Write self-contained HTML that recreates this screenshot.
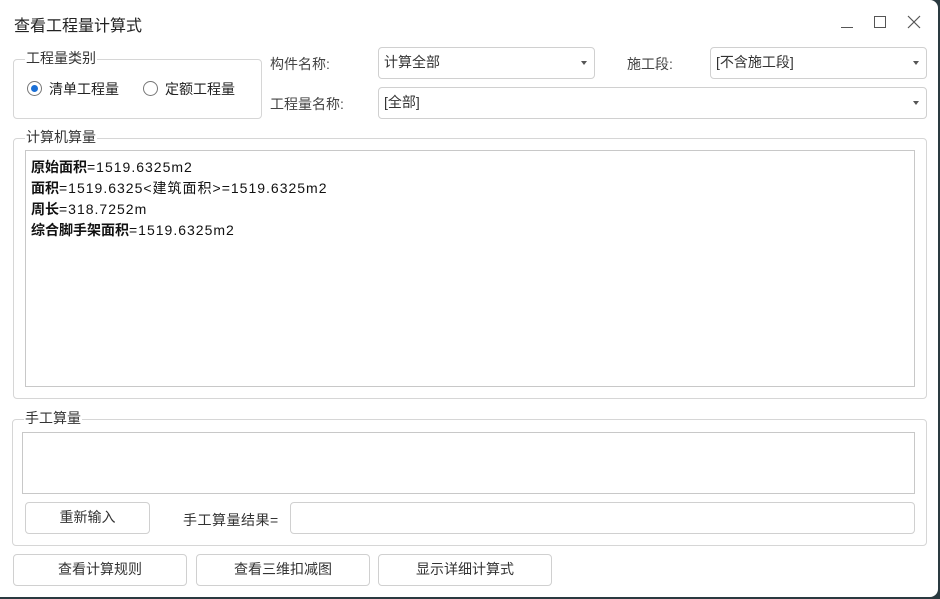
<!DOCTYPE html>
<html><head><meta charset="utf-8"><style>
*{box-sizing:border-box;margin:0;padding:0}
body{width:940px;height:599px;background:#2a3a40;position:relative;overflow:hidden;font-family:"Liberation Sans","Noto Sans CJK SC",sans-serif;font-size:14px;color:#222}
.win{position:absolute;left:0;top:0;width:938px;height:597px;background:#fff;border-radius:0 8px 8px 0}
.a{position:absolute}
.title{left:14px;top:12px;font-size:16px;color:#222}
.grp{position:absolute;border:1px solid #d6d6d6;border-radius:4px}
.leg{position:absolute;background:#fff;padding:0 1px;color:#333;font-size:14px;line-height:16px}
.box{position:absolute;border:1px solid #d0d0d0;border-radius:4px;background:#fff}
.cb{position:absolute;border:1px solid #d0d0d0;border-radius:4px;background:#fff;padding-left:5px;line-height:29px;color:#333}
.cb:after{content:"";position:absolute;right:7px;top:13px;border-left:3px solid transparent;border-right:3px solid transparent;border-top:4px solid #555}
.btn{position:absolute;border:1px solid #d0d0d0;border-radius:4px;background:#fff;text-align:center;line-height:29px;color:#333}
.lbl{position:absolute;color:#444}
.rad{position:absolute;width:15px;height:15px;border:1px solid #777;border-radius:50%}
.txt{position:absolute;left:31px;line-height:21px;font-size:14px;color:#111;letter-spacing:1px}
b{font-weight:bold;letter-spacing:0}
</style></head><body>
<div class="win">
<div class="a title">查看工程量计算式</div>
<div class="a" style="left:841px;top:27px;width:12px;border-top:1px solid #555"></div>
<div class="a" style="left:874px;top:16px;width:12px;height:12px;border:1px solid #555"></div>
<svg class="a" style="left:907px;top:15px" width="14" height="14"><path d="M1 1L13 13M13 1L1 13" stroke="#555" stroke-width="1.2"/></svg>

<div class="grp" style="left:13px;top:59px;width:249px;height:60px"></div>
<div class="leg" style="left:25px;top:50px">工程量类别</div>
<div class="rad" style="left:27px;top:81px"><div style="position:absolute;left:3px;top:3px;width:7px;height:7px;border-radius:50%;background:#1a6fd6"></div></div>
<div class="lbl" style="left:49px;top:79px;color:#222">清单工程量</div>
<div class="rad" style="left:143px;top:81px"></div>
<div class="lbl" style="left:165px;top:79px;color:#222">定额工程量</div>

<div class="lbl" style="left:270px;top:54px">构件名称:</div>
<div class="cb" style="left:378px;top:47px;width:217px;height:32px">计算全部</div>
<div class="lbl" style="left:627px;top:54px">施工段:</div>
<div class="cb" style="left:710px;top:47px;width:217px;height:32px">[不含施工段]</div>
<div class="lbl" style="left:270px;top:94px">工程量名称:</div>
<div class="cb" style="left:378px;top:87px;width:549px;height:32px">[全部]</div>

<div class="grp" style="left:13px;top:138px;width:914px;height:261px"></div>
<div class="leg" style="left:25px;top:129px">计算机算量</div>
<div class="box" style="left:25px;top:150px;width:890px;height:237px;border-radius:0;border-color:#c8c8c8"></div>
<div class="txt" style="top:157px"><b>原始面积</b>=1519.6325m2</div>
<div class="txt" style="top:178px"><b>面积</b>=1519.6325&lt;建筑面积&gt;=1519.6325m2</div>
<div class="txt" style="top:199px"><b>周长</b>=318.7252m</div>
<div class="txt" style="top:220px"><b>综合脚手架面积</b>=1519.6325m2</div>

<div class="grp" style="left:12px;top:419px;width:915px;height:127px"></div>
<div class="leg" style="left:24px;top:410px">手工算量</div>
<div class="box" style="left:22px;top:432px;width:893px;height:62px;border-radius:0;border-color:#c8c8c8"></div>
<div class="btn" style="left:25px;top:502px;width:125px;height:32px">重新输入</div>
<div class="lbl" style="left:183px;top:510px;color:#333;letter-spacing:0.5px">手工算量结果=</div>
<div class="box" style="left:290px;top:502px;width:625px;height:32px"></div>

<div class="btn" style="left:13px;top:554px;width:174px;height:32px">查看计算规则</div>
<div class="btn" style="left:196px;top:554px;width:174px;height:32px">查看三维扣减图</div>
<div class="btn" style="left:378px;top:554px;width:174px;height:32px">显示详细计算式</div>
</div>
</body></html>
